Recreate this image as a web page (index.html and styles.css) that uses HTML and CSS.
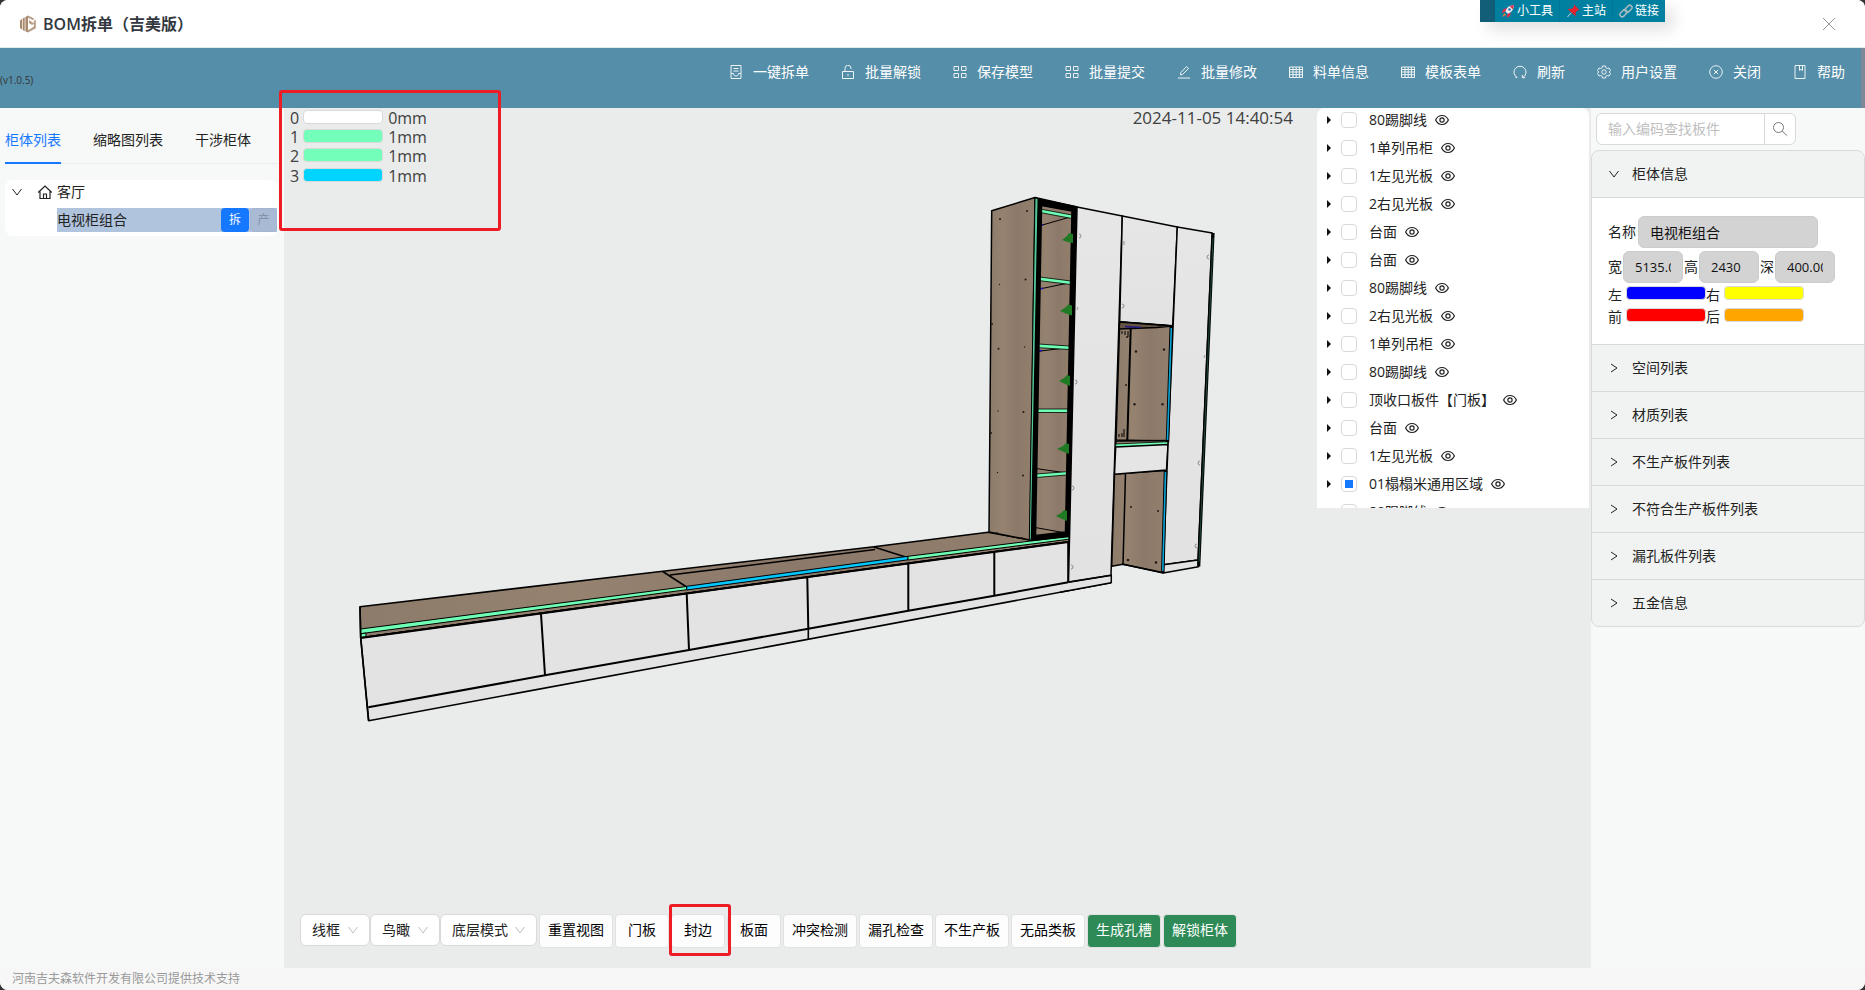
FILE: index.html
```html
<!DOCTYPE html>
<html lang="zh-CN">
<head>
<meta charset="utf-8">
<title>BOM拆单（吉美版）</title>
<link rel="stylesheet" href="styles.css">
</head>
<body>
<svg class="defs" aria-hidden="true">
  <symbol id="i-doc" viewBox="0 0 14 14"><path d="M2 .5h10v13H2zM4.500 3.500h5M4.500 6h5M2 8.500h2.500c0 1.800 1 2.500 2.500 2.500s2.500-.7 2.500-2.500H12"/></symbol>
  <symbol id="i-unlock" viewBox="0 0 14 14"><path d="M1.500 6.500h11v7h-11zM4 6.500v-3a3 3 0 0 1 6-.5v1M7 9v2"/></symbol>
  <symbol id="i-grid" viewBox="0 0 14 14"><path d="M1 1.500h4.500v4H1zM8.500 1.500H13v4H8.500zM1 8.500h4.500v4H1zM8.500 8.500H13v4H8.500z"/></symbol>
  <symbol id="i-edit" viewBox="0 0 14 14"><path d="M1 13h12M3.500 10l.4-2.500L9.500 1.500l2 2-6 6z"/></symbol>
  <symbol id="i-table" viewBox="0 0 14 14"><path d="M.5 2h13v10.500H.5zM.5 4.500h13M.5 7h13M.5 9.700h13M4 2v10.500M7.200 2v10.500M10.400 2v10.500"/></symbol>
  <symbol id="i-reload" viewBox="0 0 14 14"><path d="M4.200 12.500a6 6 0 1 1 5.600 0M9.300 10v2.700h2.900M4.200 12.500H2.500"/></symbol>
  <symbol id="i-gear" viewBox="0 0 14 14"><path d="M5.500 1h3l.5 1.800 1.300.7 1.700-.5 1.500 2.600L12.200 7l1.300 1.400L12 11l-1.700-.5-1.300.7-.5 1.800h-3L5 11.200l-1.300-.7L2 11 .5 8.400 1.800 7 .5 5.600 2 3l1.700.5L5 2.800z"/><circle cx="7" cy="7" r="2.200"/></symbol>
  <symbol id="i-circlex" viewBox="0 0 14 14"><circle cx="7" cy="7" r="6.300"/><path d="M4.800 4.800l4.400 4.400M9.200 4.800L4.800 9.200"/></symbol>
  <symbol id="i-book" viewBox="0 0 14 14"><path d="M2 .5h10v13H2zM6.500 .5v5L8 4.300l1.500 1.200v-5"/></symbol>
  <symbol id="i-eye" viewBox="0 0 14 14"><path d="M.6 7C2 4.100 4.300 2.500 7 2.500S12 4.100 13.400 7C12 9.900 9.700 11.500 7 11.500S2 9.900.6 7z"/><circle cx="7" cy="7" r="2.100"/></symbol>
  <symbol id="i-down" viewBox="0 0 12 12"><path d="M1.500 3L6 9l4.500-6"/></symbol>
  <symbol id="i-right" viewBox="0 0 12 12"><path d="M3 2l6 4-6 4"/></symbol>
</svg>

<div class="window">
  <header class="titlebar">
    <svg class="logo" viewBox="0 0 16 18"><path fill="#a98a6f" d="M0 5.500L2 4v10.500L0 13zM2.700 3.600L4.700 2.300v13.900L2.700 15zM5.400 2L8 .5v17l-2.600-1.300z"/><path fill="#b79b83" d="M8 .5l6.500 3.300-1.700 1.300L8 2.800zM9 5l5 3.500-2 1.500-3-2zM15.800 4.500v8.700L8 17.500v-2.300l5.800-3.400V6z"/></svg>
    <h1>BOM拆单（吉美版）</h1>
    <nav class="quick">
      <span class="quick-grip"></span>
      <a href="#"><svg viewBox="0 0 14 14"><path fill="#e9edf2" d="M13 1C9 1 6 3 4 7l3 3c4-2 6-5 6-9z"/><path fill="#d8304f" d="M13 1l-4.500 1L12 5.500zM6 4L2.500 5 .5 9 4 8zM10 8.500L9 12l-3.500 2L6.500 10z"/><circle cx="8.500" cy="5.500" r="1.300" fill="#2c6f9c"/><path fill="#f2762e" d="M3.500 9L1 13l4-2z"/></svg>小工具</a>
      <a href="#"><svg viewBox="0 0 14 14"><path stroke="#c5d3da" d="M5.500 8.500L1.500 13"/><path fill="#e8202c" d="M8 .5L13.500 6l-2 .5-2 2 .3 4L1.500 5 6 4.800l2-2z"/></svg>主站</a>
      <a href="#"><svg viewBox="0 0 14 14"><g fill="none" stroke="#a7b9c2" stroke-width="1.500"><rect x="5.500" y="2.500" width="8" height="4.500" rx="2.200" transform="rotate(-45 9.500 4.700)"/><rect x=".5" y="7" width="8" height="4.500" rx="2.200" transform="rotate(-45 4.500 9.300)"/></g></svg>链接</a>
    </nav>
    <button class="close" aria-label="关闭窗口"><svg viewBox="0 0 14 14"><path d="M1 1l12 12M13 1L1 13"/></svg></button>
  </header>

  <div class="toolbar">
    <span class="version">(v1.0.5)</span>
    <nav class="menu">
      <button><svg><use href="#i-doc"/></svg>一键拆单</button>
      <button><svg><use href="#i-unlock"/></svg>批量解锁</button>
      <button><svg><use href="#i-grid"/></svg>保存模型</button>
      <button><svg><use href="#i-grid"/></svg>批量提交</button>
      <button><svg><use href="#i-edit"/></svg>批量修改</button>
      <button><svg><use href="#i-table"/></svg>料单信息</button>
      <button><svg><use href="#i-table"/></svg>模板表单</button>
      <button><svg><use href="#i-reload"/></svg>刷新</button>
      <button><svg><use href="#i-gear"/></svg>用户设置</button>
      <button><svg><use href="#i-circlex"/></svg>关闭</button>
      <button><svg><use href="#i-book"/></svg>帮助</button>
    </nav>
  </div>

  <main class="work">
    <aside class="left">
      <div class="tabs" role="tablist">
        <button role="tab" aria-selected="true" class="tab active">柜体列表</button>
        <button role="tab" class="tab">缩略图列表</button>
        <button role="tab" class="tab">干涉柜体</button>
      </div>
      <div class="tree">
        <div class="tree-room">
          <svg class="chev"><use href="#i-down"/></svg>
          <svg class="home" viewBox="0 0 16 16"><path d="M1.200 8.500L8 2l6.800 6.500M3 7.500v7h10v-7M6.500 14.500V10h3v4.500"/></svg>
          <span>客厅</span>
        </div>
        <div class="tree-item">
          <span>电视柜组合</span>
          <button class="mini primary">拆</button>
          <button class="mini" disabled>产</button>
        </div>
      </div>
    </aside>

    <section class="stage">
      <svg class="scene" viewBox="284 108 1307 860" stroke-linejoin="round">
        <defs>
          <linearGradient id="wood" x1="0" x2="1" y1="0" y2="0"><stop offset="0" stop-color="#8d7b6b"/><stop offset=".3" stop-color="#95826f"/><stop offset=".6" stop-color="#8c796a"/><stop offset="1" stop-color="#937f6c"/></linearGradient>
          <linearGradient id="door" x1="0" x2="0" y1="0" y2="1"><stop offset="0" stop-color="#e6e6e6"/><stop offset="1" stop-color="#e2e2e2"/></linearGradient>
        </defs>
        <g stroke="#000" stroke-width="1.600">
          <path fill="url(#wood)" d="M360 606.700L662.700 571.300 874 546.700 988 532.300 1030 540 1069 536V541.700L908 563.300 686.700 593.300 360.700 637.700z"/>
          <path fill="none" d="M662.700 571.500L686.700 587M670 575L740 566.500 875 549.500M874 547L908 557.700"/>
          <path fill="#6fffb4" d="M360.700 629L686.700 586.500V589.700L360.700 633.700z" stroke-width="1"/>
          <path fill="#6fffb4" d="M361 633.700l5-.6v4l-5 .6z" stroke-width="1"/>
          <path fill="#00c8ff" d="M686.700 586.300L908 556.300V559.800L686.700 590z" stroke-width="1"/>
          <path fill="#6fffb4" d="M908 556.300L1069 536.200V539.200L908 560z" stroke-width="1"/>
          <path fill="#e3e3e3" d="M360.700 637.700L1068.500 541.700V582L1111 575.300V582.700L740 652 368.700 720.700z"/>
          <path fill="none" stroke-width="2" d="M360.700 638L686.700 593.500 908 563.500 1068.500 542M368.300 707.300L545 675.300 689 650 808.300 628.700 908.300 610.700 994.300 595.700 1068.300 582.300M541 614L545 675.300M686.700 593.500L689 650M807.300 577.500L808.300 629M908.300 563V610.700M994.300 552V595.700M1068.300 542V582"/>
          <path fill="none" d="M360 606.700L360.700 637.700 368.500 720.700M808.300 629V638.700"/>
        </g>

        <g stroke="#000" stroke-width="1.500">
          <path fill="url(#wood)" d="M991.700 210.700L1035 197.500 1030 540 989 532z"/>
          <path fill="#55c898" d="M1035 197.500L1038.700 199 1032.700 540H1029.300z" stroke-width="1"/>
          <path fill="url(#wood)" d="M1040 203L1074 210 1067 534 1034 538z"/>
          <path fill="none" stroke-width="1" d="M1040 225.700L1072 216.500M1039.500 289L1071 282.500M1038 351.300L1069.500 347.500M1036 468.500L1066.500 473M1035 527.500L1066 533"/>
          <path fill="#6fffb4" stroke-width=".8" d="M1041 209.200L1072 215V218.500L1041 212.700zM1039.500 277L1071 281V284.500L1039.500 280.700zM1038.500 344L1069.500 346V349.500L1038.500 347.700zM1037 409H1068V412.500H1037zM1036 474L1066.500 471.700V475L1036 477.500z"/>
          <path stroke="#1d10c0" stroke-width="1.500" d="M1040 225.500l3-.8M1039.500 289l3.500-.7M1038.500 351l3.500-.5"/>
          <path fill="#000" fill-rule="evenodd" d="M1038.300 199L1077 207 1069 536.500 1031.500 540.500zM1041.500 205.500L1035.500 535.500 1065.500 532 1072 211z"/>
          <g fill="#207a24" stroke="none">
            <path d="M1062 240l5-4 2-3 4 1v9l-5-1z"/><path d="M1060 311l6-4 2-2.500 4 1v10l-5-1.500z"/><path d="M1059 381l5-3 3-3 3 1v10l-5-2z"/><path d="M1057 449l6-3 3-3 3 1v10l-5-2z"/><path d="M1056 516l5-3 3-3 3 1v10l-5-2z"/>
          </g>
          <path fill="#e3e3e3" d="M1068.500 582L1111 575.300V582.700L1068.500 590.600" stroke="none"/>
          <path fill="none" d="M1060 592.200L1111 582.700"/>
          <path fill="url(#door)" d="M1077 207L1122.300 216 1111 575.300 1068.500 582z"/>
          <path fill="none" d="M1068.500 582.300L1111.300 575.300V582.700"/>
          <path fill="url(#door)" d="M1122.300 216L1177.300 227 1172.700 325.700 1119.700 321.700z"/>
          <path fill="url(#wood)" d="M1119.700 322L1172 326 1168 441 1116 440z"/>
          <path fill="#655344" d="M1119.700 322L1172 326 1157 327.500 1119 329z"/>
          <path stroke="#1d1580" d="M1125 326.500l16 1"/>
          <path fill="none" stroke-width="2" d="M1130.700 329L1127.300 440"/>
          <path fill="none" stroke-width="1" d="M1122 331v3M1125 331v4M1128 331v6M1119 437v-3M1122 437v-4M1124 437v-8"/>
          <path fill="url(#wood)" d="M1114.500 474L1165 470.500 1162.500 572.500 1123 564.300 1111.700 566.300z"/>
          <path fill="none" d="M1125.500 473L1123 564.300"/>
          <path fill="#8b7867" d="M1116 441L1168 440.500V443L1115.700 446z"/>
          <path fill="#6fffb4" stroke-width=".8" d="M1115.700 444L1168 441.700V444.700L1115.700 447.200z"/>
          <path fill="#e5e5e5" d="M1115.700 447L1168 444.500 1166.500 470 1114.500 474.300z"/>
          <path fill="url(#door)" d="M1177.300 227L1212.300 233 1198 560 1163.500 564.700 1167 470z"/>
          <path fill="#e3e3e3" d="M1163.500 564.700L1198 560 1198.500 566.700 1163.300 573z"/>
          <path fill="none" d="M1035 197.500L1077 207M1163.300 573L1123 564.300"/>
          <path stroke-width="3.500" d="M1171.300 326L1167.500 442M1165.500 471L1162.800 572.500"/>
          <path stroke="#08a4d8" stroke-width="1.600" d="M1171.300 328L1167.500 440M1165.500 472L1162.800 571"/>
          <path stroke-width="3.200" d="M1213 233L1198.700 566.500"/>
          <path stroke="#1e4a38" stroke-width="1" d="M1213 238L1199 562"/>
        </g>
        <g fill="#201a16">
          <circle cx="1000" cy="219" r="1"/><circle cx="1027" cy="211" r="1"/><circle cx="1025.500" cy="279.500" r="1"/><circle cx="999.500" cy="284.500" r=".7"/><circle cx="998.500" cy="348.700" r="1"/><circle cx="1024.500" cy="347" r=".7"/><circle cx="998" cy="411" r=".7"/><circle cx="1023.500" cy="412" r="1"/><circle cx="997.500" cy="472.500" r=".7"/><circle cx="1023" cy="475.500" r="1"/><circle cx="997" cy="533" r="1"/><circle cx="1022" cy="538" r="1"/>
          <circle cx="1136" cy="351.500" r="1.200"/><circle cx="1164" cy="349.500" r="1.200"/><circle cx="1134.500" cy="404.300" r="1.200"/><circle cx="1162.500" cy="404.300" r="1.200"/><circle cx="1126" cy="385" r="1"/><circle cx="1127" cy="337" r="1"/><circle cx="1131" cy="507" r="1"/><circle cx="1158" cy="511" r="1"/><circle cx="1128" cy="560" r="1.300"/><circle cx="1156" cy="562.500" r="1.300"/><circle cx="992" cy="324" r="1"/><circle cx="991" cy="433" r="1"/>
        </g>
        <g fill="none" stroke="#777" stroke-width=".8">
          <path d="M1079 234a2 2 0 0 1 0 4M1077 307a2 2 0 0 1 0 3M1075 380a2 2 0 0 1 0 4M1072 486a2 2 0 0 1 0 4M1071 565a2 2 0 0 1 0 4M1124 241v4M1122 304a2 2 0 0 1 0 4M1209 255a2 2 0 0 0 0 4M1205 355a2 2 0 0 0 0 3M1200 461a2 2 0 0 0 0 4M1197 544a2 2 0 0 0 0 4"/>
        </g>
      </svg>

      <div class="legend">
        <div><span>0</span><i class="swatch white"></i><span>0mm</span></div>
        <div><span>1</span><i class="swatch mint"></i><span>1mm</span></div>
        <div><span>2</span><i class="swatch mint"></i><span>1mm</span></div>
        <div><span>3</span><i class="swatch cyan"></i><span>1mm</span></div>
      </div>
      <div class="mark mark-legend"></div>
      <time class="clock">2024-11-05 14:40:54</time>

      <div class="parts">
        <div class="part"><label><input type="checkbox">80踢脚线</label><svg><use href="#i-eye"/></svg></div>
        <div class="part"><label><input type="checkbox">1单列吊柜</label><svg><use href="#i-eye"/></svg></div>
        <div class="part"><label><input type="checkbox">1左见光板</label><svg><use href="#i-eye"/></svg></div>
        <div class="part"><label><input type="checkbox">2右见光板</label><svg><use href="#i-eye"/></svg></div>
        <div class="part"><label><input type="checkbox">台面</label><svg><use href="#i-eye"/></svg></div>
        <div class="part"><label><input type="checkbox">台面</label><svg><use href="#i-eye"/></svg></div>
        <div class="part"><label><input type="checkbox">80踢脚线</label><svg><use href="#i-eye"/></svg></div>
        <div class="part"><label><input type="checkbox">2右见光板</label><svg><use href="#i-eye"/></svg></div>
        <div class="part"><label><input type="checkbox">1单列吊柜</label><svg><use href="#i-eye"/></svg></div>
        <div class="part"><label><input type="checkbox">80踢脚线</label><svg><use href="#i-eye"/></svg></div>
        <div class="part"><label><input type="checkbox">顶收口板件【门板】</label><svg><use href="#i-eye"/></svg></div>
        <div class="part"><label><input type="checkbox">台面</label><svg><use href="#i-eye"/></svg></div>
        <div class="part"><label><input type="checkbox">1左见光板</label><svg><use href="#i-eye"/></svg></div>
        <div class="part"><label><input type="checkbox" class="partial">01榻榻米通用区域</label><svg><use href="#i-eye"/></svg></div>
        <div class="part"><label><input type="checkbox">80踢脚线</label><svg><use href="#i-eye"/></svg></div>
      </div>

      <div class="controls">
        <div class="picks">
          <div class="pick"><select aria-label="显示方式"><option>线框</option></select><svg><use href="#i-down"/></svg></div>
          <div class="pick"><select aria-label="视角"><option>鸟瞰</option></select><svg><use href="#i-down"/></svg></div>
          <div class="pick wide"><select aria-label="模式"><option>底层模式</option></select><svg><use href="#i-down"/></svg></div>
        </div>
        <button class="btn">重置视图</button>
        <button class="btn short">门板</button>
        <div class="marked"><button class="btn short">封边</button><div class="mark mark-button"></div></div>
        <button class="btn short">板面</button>
        <button class="btn">冲突检测</button>
        <button class="btn">漏孔检查</button>
        <button class="btn">不生产板</button>
        <button class="btn">无品类板</button>
        <button class="btn green">生成孔槽</button>
        <button class="btn green">解锁柜体</button>
      </div>
    </section>

    <aside class="right">
      <div class="search">
        <input type="text" placeholder="输入编码查找板件" aria-label="板件编码">
        <button aria-label="查找"><svg viewBox="0 0 16 16"><circle cx="6.500" cy="6.500" r="5"/><path d="M10.200 10.200l5 4.500"/></svg></button>
      </div>
      <div class="collapse">
        <button class="fold"><svg><use href="#i-down"/></svg>柜体信息</button>
        <div class="fold-body">
          <div class="line name"><label for="f-name">名称</label><input id="f-name" value="电视柜组合" disabled></div>
          <div class="line size">
            <label for="f-w">宽</label><input id="f-w" value="5135.00" disabled>
            <label for="f-h">高</label><input id="f-h" value="2430" disabled>
            <label for="f-d">深</label><input id="f-d" value="400.00" disabled>
          </div>
          <div class="line edge"><span>左</span><i class="swatch blue"></i><span>右</span><i class="swatch yellow"></i></div>
          <div class="line edge"><span>前</span><i class="swatch red"></i><span>后</span><i class="swatch orange"></i></div>
        </div>
        <button class="fold"><svg><use href="#i-right"/></svg>空间列表</button>
        <button class="fold"><svg><use href="#i-right"/></svg>材质列表</button>
        <button class="fold"><svg><use href="#i-right"/></svg>不生产板件列表</button>
        <button class="fold"><svg><use href="#i-right"/></svg>不符合生产板件列表</button>
        <button class="fold"><svg><use href="#i-right"/></svg>漏孔板件列表</button>
        <button class="fold"><svg><use href="#i-right"/></svg>五金信息</button>
      </div>
    </aside>
  </main>

  <footer class="footer">河南吉夫森软件开发有限公司提供技术支持</footer>
</div>
</body>
</html>
```
FILE: styles.css
```css
* { box-sizing: border-box; }

body {
  margin: 0;
  background: #333;
  color: #222;
  font: 14px/22px "Open Sans", "Noto Sans CJK SC", sans-serif;
}

button, input, select { font: inherit; color: inherit; margin: 0; }
button { padding: 0; border: 0; background: none; white-space: nowrap; cursor: pointer; }
svg { fill: none; stroke: currentColor; flex: none; }
.defs { position: absolute; width: 0; height: 0; }

.window {
  display: flex;
  flex-direction: column;
  min-height: 100vh;
  border-radius: 8px;
  overflow: hidden;
  background: #f7f9f8;
}

/* Title bar */
.titlebar {
  position: relative;
  display: flex;
  align-items: center;
  height: 48px;
  padding: 0 29px 0 20px;
  border-bottom: 1px solid #e2ebec;
  background: #fff;
}
.logo { width: 16px; height: 18px; margin-right: 7px; stroke: none; }
.titlebar h1 { flex: 1; margin: 0; font-size: 16px; font-weight: 600; line-height: 24px; color: #33383f; }
.close { color: #999; line-height: 0; }
.close svg { width: 14px; height: 14px; }

.quick {
  position: absolute;
  top: 0;
  right: 200px;
  display: flex;
  height: 22px;
  background: #0080a0;
  box-shadow: 8px 8px 16px rgba(0, 0, 0, .12);
  font-size: 12px;
}
.quick-grip { width: 15px; background: #125e78; }
.quick a {
  display: flex;
  align-items: center;
  gap: 2px;
  padding: 0 6px;
  border-right: 1px solid #007796;
  color: #fff;
  text-decoration: none;
}
.quick a:last-child { border-right: 0; }
.quick svg { width: 14px; height: 14px; stroke: none; }

/* Main menu */
.toolbar {
  display: flex;
  align-items: flex-start;
  justify-content: space-between;
  height: 60px;
  border-right: 4px solid #7f8899;
  background: #558ea9;
}
.version { margin-top: 21px; font-size: 10px; color: #333; }
.menu { display: flex; }
.menu button {
  display: flex;
  align-items: center;
  gap: 10px;
  height: 48px;
  padding: 0 16px;
  color: #fff;
}
.menu svg { width: 14px; height: 14px; opacity: .9; }

.work { flex: 1; display: flex; min-height: 640px; }

/* Cabinet tree */
.left { width: 284px; padding: 10px 6px 0 5px; }
.tabs { display: flex; gap: 32px; border-bottom: 1px solid #ebeded; }
.tab { height: 46px; border-bottom: 2px solid transparent; margin-bottom: -1px; }
.tab.active { color: #1677ff; border-color: #1677ff; }
.tree { margin-top: 16px; padding-bottom: 4px; border-radius: 8px; background: #fff; }
.tree-room { display: flex; align-items: center; height: 24px; padding-left: 6px; margin-bottom: 4px; }
.chev { width: 12px; height: 12px; margin-right: 14px; }
.home { width: 16px; height: 16px; margin-right: 4px; stroke-width: 1.200; }
.tree-item { display: flex; gap: 1px; height: 24px; margin: 0 1px 0 52px; background: #b0c4de; }
.tree-item span { flex: 1; line-height: 24px; }
.mini { width: 27px; height: 24px; border: 1px solid #a3b5d0; border-radius: 4px; background: #a9bad5; color: #8292a9; font-size: 12px; }
.mini.primary { width: 28px; border: 0; background: #1677ff; color: #fff; }

/* 3D view */
.stage { position: relative; flex: 1; min-width: 0; background: #eaeceb; }
.scene { position: absolute; inset: 0; width: 100%; height: 100%; stroke: none; }

.legend { position: absolute; top: 1px; left: 6px; font-size: 16px; line-height: 19px; color: #404040; }
.legend div { display: flex; align-items: center; gap: 4px; }
.legend div:last-child { margin-top: 1px; }
.legend span:last-child { margin-left: 1px; }
.swatch { width: 80px; height: 14px; border: 1px solid #d9d9d9; border-radius: 4px; }
.legend .swatch { margin-bottom: 3px; }
.white { background: #fff; }
.mint { background: #73ffb9; }
.cyan { background: #00d4ff; }
.blue { background: #00f; }
.yellow { background: #ff0; }
.red { background: #f00; }
.orange { background: #ffa500; }

.mark { position: absolute; border: 3px solid #ee1c24; border-radius: 3px; pointer-events: none; }
.mark-legend { top: -18px; left: -5px; width: 222px; height: 141px; z-index: 1; }
.mark-button { inset: -10px -6px -8px -2px; }

.clock { position: absolute; top: 0; right: 298px; font-size: 17px; line-height: 20px; color: #404040; }

.parts {
  position: absolute;
  top: 0;
  right: 2px;
  width: 272px;
  height: 400px;
  overflow: hidden;
  border-radius: 8px 8px 0 0;
  background: #fff;
}
.part { display: flex; align-items: center; gap: 8px; height: 24px; margin-bottom: 4px; padding-left: 10px; }
.part::before { content: ""; border: 4px solid transparent; border-left-color: #111; border-right: 0; margin-right: 2px; }
.part label { display: flex; align-items: center; }
.part input {
  appearance: none;
  display: grid;
  width: 16px;
  height: 16px;
  margin: 0 12px 0 0;
  border: 1px solid #d9d9d9;
  border-radius: 4px;
  background: #fff;
}
.part .partial::before { content: ""; width: 8px; height: 8px; margin: auto; background: #1677ff; }
.part svg { width: 14px; height: 14px; stroke-width: 1.200; }

.controls {
  position: absolute;
  bottom: 20px;
  left: 16px;
  display: flex;
  gap: 2px;
  white-space: nowrap;
}
.picks { display: flex; }
.pick { position: relative; width: 70px; }
.pick.wide { width: 97px; }
.pick select {
  appearance: none;
  width: 100%;
  height: 32px;
  padding: 0 11px;
  border: 1px solid #d9d9d9;
  border-radius: 6px;
  background: #fff;
}
.pick svg { position: absolute; top: 10px; right: 11px; width: 12px; height: 12px; color: #bfbfbf; pointer-events: none; }
.btn { height: 34px; padding: 0 8px 2px; border: 1px solid #e1e3e2; border-radius: 4px; background: #fdfdfd; color: #000; }
.btn.short { padding: 0 12px 2px; }
.btn.green { background: #2e8b57; color: #fff; }
.marked { position: relative; }

/* Cabinet details */
.right { width: 274px; padding-top: 5px; }
.search { display: flex; width: 200px; height: 32px; margin: 0 0 5px 5px; border: 1px solid #d9d9d9; border-radius: 6px; background: #fff; }
.search input { flex: 1; min-width: 0; padding: 0 11px; border: 0; background: none; }
.search input::placeholder { color: #bfbfbf; }
.search button { width: 31px; border-left: 1px solid #d9d9d9; line-height: 0; color: #777; }
.search svg { width: 16px; height: 16px; }

.collapse { border: 1px solid #d9d9d9; border-radius: 8px; overflow: hidden; background: #f1f3f2; }
.fold { display: flex; align-items: center; gap: 12px; width: 100%; height: 46px; padding: 0 16px; }
.fold svg { width: 12px; height: 12px; }
.fold ~ .fold, .fold-body { border-top: 1px solid #d9d9d9; }
.fold ~ .fold { height: 47px; }
.fold-body { padding: 18px 16px 16px; background: #fff; }
.line { display: flex; align-items: center; }
.line input { height: 32px; padding: 0 11px; border: 1px solid #ccc; border-radius: 6px; background: #d3d3d3; color: #111; }
.name { gap: 2px; margin-bottom: 3px; }
.name input { width: 180px; }
.size { gap: 1px; margin-bottom: 1px; }
.size input { width: 60px; font-size: 13px; }
.edge { height: 22px; }
.edge .swatch { margin: 0 0 4px 4px; }

.footer { height: 22px; padding-left: 12px; background: #f7f7f7; color: #999; font-size: 12px; line-height: 22px; }
```
